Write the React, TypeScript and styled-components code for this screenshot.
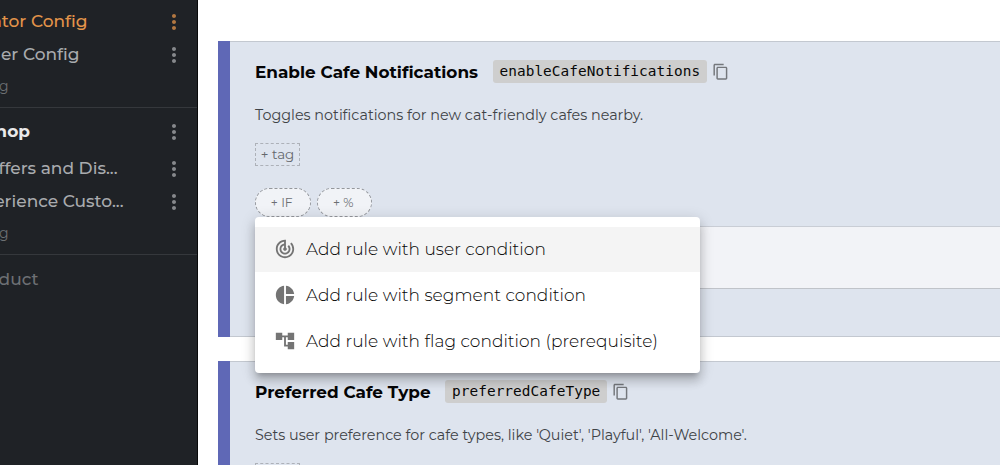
import React from 'react';
import styled, { createGlobalStyle } from 'styled-components';
import {
  MdAccountTree,
  MdContentCopy,
  MdMoreVert,
  MdPieChart,
  MdTrackChanges,
} from 'react-icons/md';

const GlobalStyle = createGlobalStyle`
  * { box-sizing: border-box; }
  body {
    margin: 0;
    background: #fff;
    font-family: Montserrat, Inter, sans-serif;
    overflow: hidden;
  }
`;

const Page = styled.div`
  display: flex;
  height: 465px;
  overflow: hidden;
`;

const Sidebar = styled.aside`
  flex: 0 0 198px;
  background: #1f2226;
  border-right: 1px solid #08090a;
  overflow: hidden;
`;

const Section = styled.section<{ $top: number; $bottom: number }>`
  padding: ${(p) => p.$top}px 0 ${(p) => p.$bottom}px;
  border-bottom: 1px solid #35383c;
`;

const NavRow = styled.div<{ $height?: number; $color?: string; $gap?: number }>`
  display: flex;
  align-items: center;
  height: ${(p) => p.$height ?? 33}px;
  margin-bottom: ${(p) => p.$gap ?? 0}px;
  color: ${(p) => p.$color ?? '#a9abae'};
  svg {
    margin: 2px 11px 0 auto;
    flex: none;
    opacity: 0.75;
  }
`;

const NavLabel = styled.span<{ $width: number; $weight?: number; $size?: number }>`
  display: flex;
  justify-content: flex-end;
  width: ${(p) => p.$width}px;
  white-space: nowrap;
  font-size: ${(p) => p.$size ?? 17}px;
  font-weight: ${(p) => p.$weight ?? 500};
`;

const Main = styled.main`
  flex: 1;
  min-width: 0;
  padding: 41px 0 0 20px;
  display: flex;
  flex-direction: column;
  gap: 24px;
`;

const Card = styled.article`
  position: relative;
  flex: 0 0 296px;
  border-left: 12px solid #5f68b6;
  background: #dee4ee;
  box-shadow: inset 0 1px 0 #c3c8d0, inset 0 -1px 0 #c3c8d0;
  padding: 17px 0 0 25px;
`;

const TitleRow = styled.div`
  display: flex;
  align-items: center;
  height: 27px;
`;

const Title = styled.h2`
  margin: 1px 14.5px 0 0;
  font-size: 16.88px;
  font-weight: 700;
  line-height: 27px;
  color: #050506;
  white-space: nowrap;
`;

const Key = styled.code`
  height: 23px;
  padding: 0 7px;
  border-radius: 3px;
  background: #cecece;
  color: #080808;
  font: 14.4px/22px Menlo, 'DejaVu Sans Mono', monospace;
  letter-spacing: 0.06px;
  margin-right: 4.5px;
`;

const CopyIcon = styled(MdContentCopy)`
  width: 17.5px;
  height: 17.5px;
  color: #74777c;
`;

const Description = styled.p`
  margin: 19px 0 0;
  font-size: 14.35px;
  line-height: 22px;
  color: #404347;
  white-space: nowrap;
`;

const AddTag = styled.div`
  display: flex;
  align-items: center;
  justify-content: center;
  width: 45px;
  height: 23px;
  margin-top: 17px;
  padding-bottom: 1px;
  border: 1px dashed #adb1b8;
  color: #64676c;
  font-size: 13.4px;
`;

const PillRow = styled.div`
  display: flex;
  gap: 6px;
  margin-top: 22px;
`;

const Pill = styled.div`
  width: 55.5px;
  height: 29px;
  border: 1px dashed #94979c;
  border-radius: 15px;
  background: #f1f3f7;
  color: #6c6f73;
  font-size: 12.3px;
  line-height: 27px;
  padding-right: 2px;
  text-align: center;
`;

const RulePanel = styled.div`
  height: 63px;
  margin-top: 9px;
  background: #f2f3f7;
  border-top: 1px solid #c9cdd5;
  border-bottom: 1px solid #c0c3c9;
`;

const Menu = styled.ul`
  position: absolute;
  z-index: 2;
  left: 25px;
  top: 176px;
  width: 445.4px;
  height: 156.4px;
  margin: 0;
  padding: 9.5px 0;
  list-style: none;
  background: #fff;
  border-radius: 4px;
  box-shadow: 0 5px 5px -3px rgba(0, 0, 0, 0.2), 0 8px 10px 1px rgba(0, 0, 0, 0.14),
    0 3px 14px 2px rgba(0, 0, 0, 0.12);
`;

const MenuItem = styled.li<{ $active?: boolean }>`
  display: flex;
  align-items: center;
  gap: 10px;
  height: 45.8px;
  padding-left: 19px;
  background: ${(p) => (p.$active ? '#f4f4f4' : 'transparent')};
  color: #050505;
  font-size: 17px;
  font-weight: 300;
  letter-spacing: 0.05px;
  white-space: nowrap;
  svg {
    width: 22px;
    height: 22px;
    color: #747474;
  }
`;

export default function App() {
  return (
    <Page>
      <GlobalStyle />
      <Sidebar>
        <Section $top={4} $bottom={5}>
          <NavRow $color="#e3944a">
            <NavLabel $width={87.5}>ator Config</NavLabel>
            <MdMoreVert size={24} />
          </NavRow>
          <NavRow>
            <NavLabel $width={79.5}>er Config</NavLabel>
            <MdMoreVert size={24} />
          </NavRow>
          <NavRow $height={32} $color="#6d7074">
            <NavLabel $width={8.5} $size={14} $weight={400}>g</NavLabel>
          </NavRow>
        </Section>
        <Section $top={7} $bottom={6.5}>
          <NavRow $color="#e9e9ea" $height={32} $gap={4}>
            <NavLabel $width={30} $weight={700}>hop</NavLabel>
            <MdMoreVert size={24} color="#a9abae" />
          </NavRow>
          <NavRow $height={34}>
            <NavLabel $width={117.5}>ffers and Dis...</NavLabel>
            <MdMoreVert size={24} />
          </NavRow>
          <NavRow $height={32.5}>
            <NavLabel $width={123.5}>erience Custo...</NavLabel>
            <MdMoreVert size={24} />
          </NavRow>
          <NavRow $height={30} $color="#6d7074">
            <NavLabel $width={8.5} $size={14} $weight={400}>g</NavLabel>
          </NavRow>
        </Section>
        <NavRow $height={48} $color="#6d7074">
          <NavLabel $width={38.5}>duct</NavLabel>
        </NavRow>
      </Sidebar>
      <Main>
        <Card>
          <TitleRow>
            <Title>Enable Cafe Notifications</Title>
            <Key>enableCafeNotifications</Key>
            <CopyIcon />
          </TitleRow>
          <Description>Toggles notifications for new cat-friendly cafes nearby.</Description>
          <AddTag>+ tag</AddTag>
          <PillRow>
            <Pill>+ IF</Pill>
            <Pill>+ %</Pill>
          </PillRow>
          <RulePanel />
          <Menu>
            <MenuItem $active>
              <MdTrackChanges />
              Add rule with user condition
            </MenuItem>
            <MenuItem>
              <MdPieChart />
              Add rule with segment condition
            </MenuItem>
            <MenuItem>
              <MdAccountTree />
              Add rule with flag condition (prerequisite)
            </MenuItem>
          </Menu>
        </Card>
        <Card>
          <TitleRow>
            <Title>Preferred Cafe Type</Title>
            <Key>preferredCafeType</Key>
            <CopyIcon />
          </TitleRow>
          <Description>
            Sets user preference for cafe types, like 'Quiet', 'Playful', 'All-Welcome'.
          </Description>
          <AddTag>+ tag</AddTag>
        </Card>
      </Main>
    </Page>
  );
}
